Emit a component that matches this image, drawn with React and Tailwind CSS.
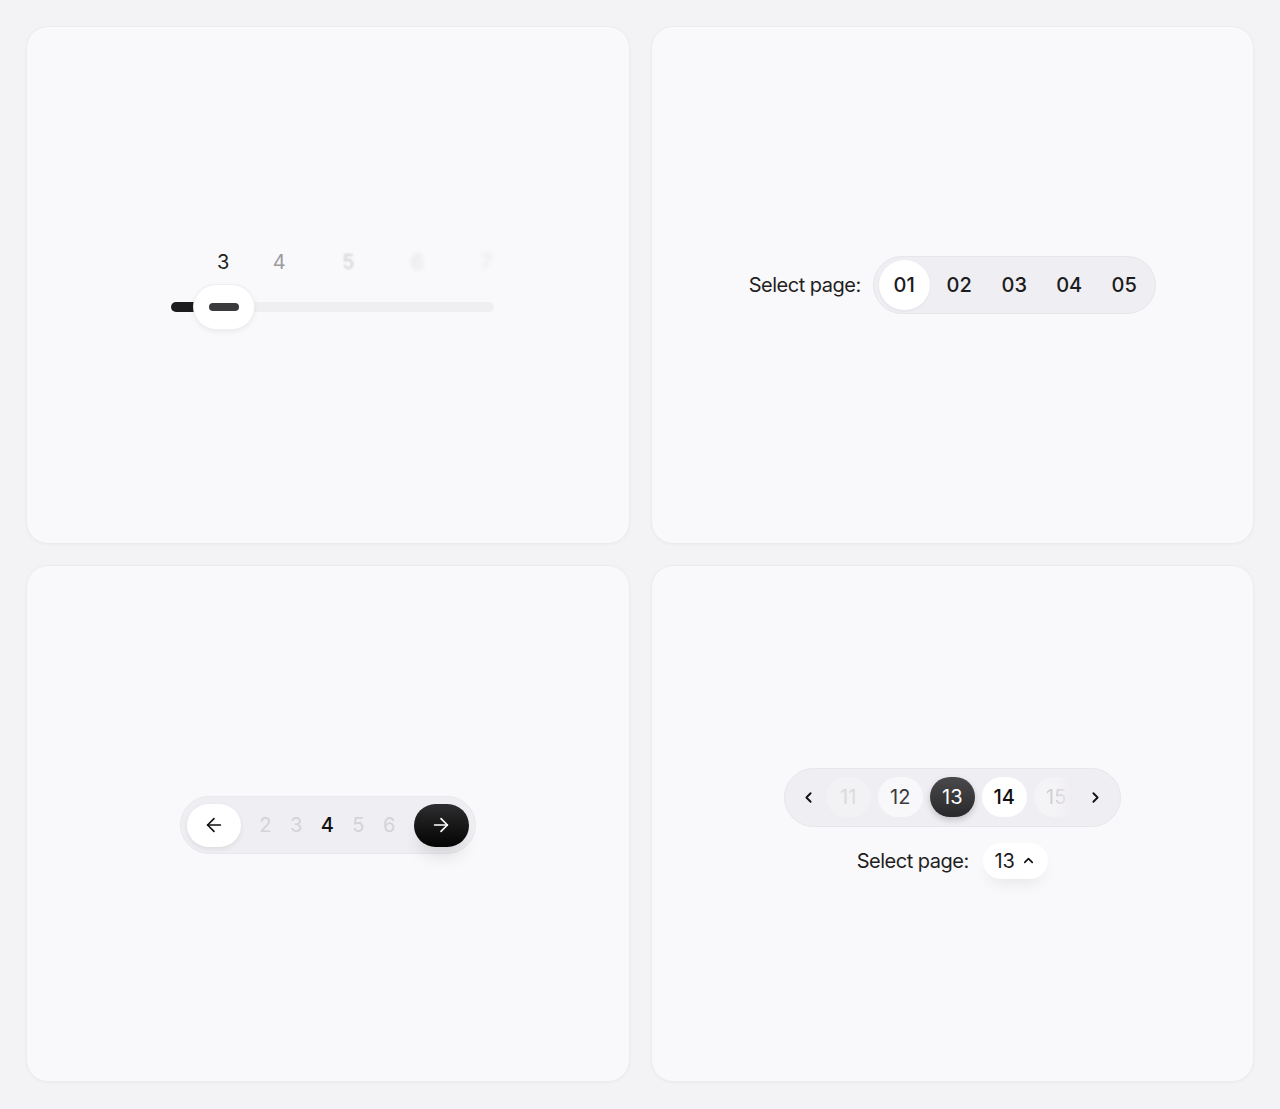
import React from 'react'
import { ArrowLeft, ArrowRight, ChevronLeft, ChevronRight, ChevronUp } from 'lucide-react'

const Card = ({ children }) => (
  <div className="bg-[#f9f8fa] rounded-[22px] border border-[#ecebef] shadow-[0_1px_3px_rgba(0,0,0,0.03)] flex items-center justify-center">
    {children}
  </div>
)

// scroll-style slider: labels fade out the farther they are from the thumb
const SliderPager = () => {
  const labels = [
    { n: 3, cls: 'ml-[42px] text-[#1f1f22]' },
    { n: 4, cls: 'ml-[36px] text-[#9b9ba1]' },
    { n: 5, cls: 'ml-[49px] text-[#cfcfd4] blur-[1px]' },
    { n: 6, cls: 'ml-[49px] text-[#e2e1e6] blur-[2px]' },
    { n: 7, cls: 'ml-[49px] text-[#e6e5ea] blur-[2.5px]' },
  ]
  return (
    <div className="mb-[8px] ml-[12px] flex flex-col">
      <div className="flex h-[24px] items-center">
        {labels.map((l) => (
          <span key={l.n} className={`${l.cls} w-[20px] text-center text-[20px] leading-none`}>
            {l.n}
          </span>
        ))}
      </div>
      <div className="relative mt-[28px] h-[10px] w-[323px] rounded-full bg-[#efeef1]">
        <div className="h-full w-[34px] rounded-full bg-[#1c1c1e]" />
        <div className="absolute left-[23px] top-[-17px] flex h-[44px] w-[60px] items-center justify-center rounded-full bg-white shadow-[0_2px_6px_rgba(0,0,0,0.08)] ring-1 ring-[#efeef1]">
          <div className="h-[8px] w-[30px] rounded-full bg-[#3b3b3e]" />
        </div>
      </div>
    </div>
  )
}

const SegmentPager = () => (
  <div className="flex items-center gap-[12px]">
    <span className="text-[20px] tracking-[-0.025em] text-[#1f1f22]">Select page:</span>
    <div className="flex h-[58px] items-center gap-[4px] rounded-full border border-[#e7e6ea] bg-[#efeef2] px-[5px]">
      {['01', '02', '03', '04', '05'].map((p, i) => (
        <div
          key={p}
          className={`flex h-[50px] w-[51px] items-center justify-center rounded-full text-[20px] font-medium text-[#1c1c1e] ${
            i === 0 ? 'bg-white shadow-[0_1px_3px_rgba(0,0,0,0.06)]' : ''
          }`}
        >
          {p}
        </div>
      ))}
    </div>
  </div>
)

const ArrowPager = () => (
  <div className="mt-[4px] flex h-[58px] items-center rounded-full border border-[#e9e8ec] bg-[#efeef2] px-[6px]">
    <button className="flex h-[43px] w-[54px] items-center justify-center rounded-full bg-white shadow-[0_2px_5px_rgba(0,0,0,0.08)]">
      <ArrowLeft size={22} strokeWidth={1.8} className="text-[#111]" />
    </button>
    <div className="flex w-[173px] justify-center">
      {[2, 3, 4, 5, 6].map((n) => (
        <span
          key={n}
          className={`w-[31px] text-center text-[20px] ${
            n === 4 ? 'font-medium text-[#111]' : 'text-[#d3d3d8]'
          }`}
        >
          {n}
        </span>
      ))}
    </div>
    <button className="flex h-[43px] w-[55px] items-center justify-center rounded-full bg-gradient-to-b from-[#2e2e30] to-[#050505] shadow-[0_14px_18px_-6px_rgba(0,0,0,0.12)]">
      <ArrowRight size={22} strokeWidth={1.8} className="text-white" />
    </button>
  </div>
)

const NumberPager = () => (
  <div className="flex flex-col items-center gap-[16px]">
    <div className="flex h-[59px] items-center gap-[7px] rounded-full border border-[#e7e6ea] bg-[#efeef2] px-[14px]">
      <span className="flex w-[20px] justify-center">
        <ChevronLeft size={17} strokeWidth={2.6} className="text-[#111]" />
      </span>
      <span className="flex h-[40px] w-[45px] items-center justify-center rounded-full bg-[#f2f1f4] text-[20px] text-[#dadade]">
        11
      </span>
      <span className="flex h-[40px] w-[45px] items-center justify-center rounded-full bg-[#f8f8fa] text-[20px] text-[#3a3a3d]">
        12
      </span>
      <span className="flex h-[40px] w-[45px] items-center justify-center rounded-full bg-gradient-to-b from-[#4a4a4c] to-[#29292b] text-[20px] text-white shadow-[0_3px_6px_rgba(0,0,0,0.18)]">
        13
      </span>
      <span className="flex h-[40px] w-[45px] items-center justify-center rounded-full bg-white text-[20px] font-medium text-[#111]">
        14
      </span>
      <span className="flex h-[40px] w-[45px] items-center justify-center rounded-full bg-[#f4f3f6] text-[20px] text-[#cfcfd3] [mask-image:linear-gradient(to_right,black_45%,transparent_85%)]">
        15
      </span>
      <span className="flex w-[20px] justify-center">
        <ChevronRight size={17} strokeWidth={2.6} className="text-[#111]" />
      </span>
    </div>
    <div className="flex items-center gap-[14px]">
      <span className="text-[20px] tracking-[-0.025em] text-[#1f1f22]">Select page:</span>
      <div className="flex h-[36px] w-[65px] items-center justify-center gap-[6px] rounded-full bg-white shadow-[0_10px_16px_-6px_rgba(0,0,0,0.08)]">
        <span className="text-[20px] text-[#1c1c1e]">13</span>
        <ChevronUp size={15} strokeWidth={2.6} className="text-[#111]" />
      </div>
    </div>
  </div>
)

export default function App() {
  return (
    <div
      className="min-h-[1109px] w-full bg-[#f3f2f5] px-[26px] pt-[26px] pb-[27px]"
      style={{ fontFamily: 'Inter, "Noto Sans", sans-serif' }}
    >
      <div className="grid h-[1056px] grid-cols-2 grid-rows-2 gap-[21px]">
        <Card>
          <SliderPager />
        </Card>
        <Card>
          <SegmentPager />
        </Card>
        <Card>
          <ArrowPager />
        </Card>
        <Card>
          <NumberPager />
        </Card>
      </div>
    </div>
  )
}
